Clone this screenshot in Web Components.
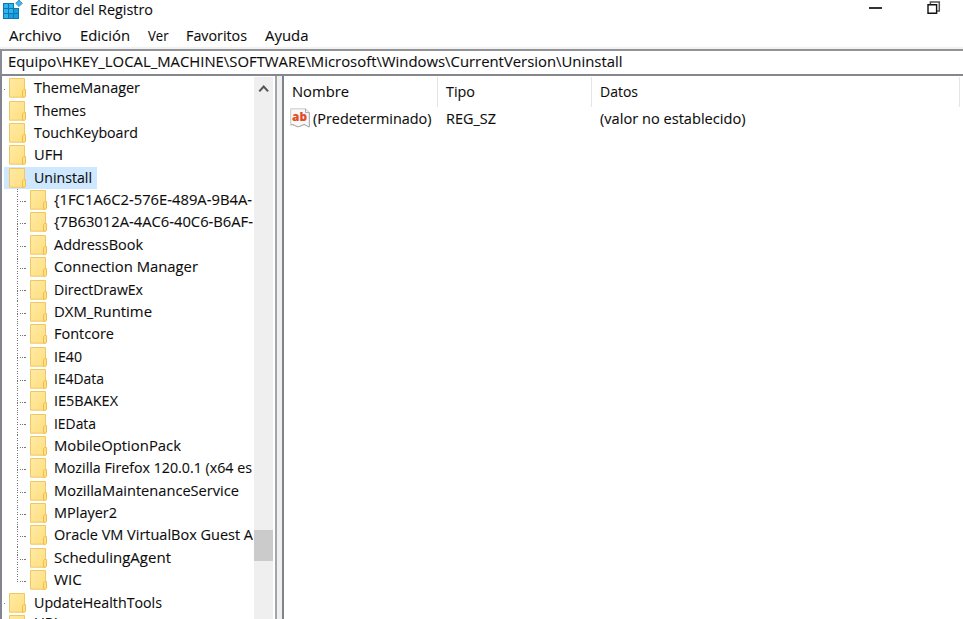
<!DOCTYPE html>
<html lang="es">
<head>
<meta charset="utf-8">
<title>Editor del Registro</title>
<style>
html,body{margin:0;height:100%;overflow:hidden;background:#fff}
</style>
</head>
<body>
<registry-editor></registry-editor>
<script>
const make = (name, html, setup) => customElements.define(name, class extends HTMLElement {
  connectedCallback() {
    if (this.shadowRoot) return;
    const root = this.attachShadow({mode: 'open'});
    const t = document.createElement('template');
    t.innerHTML = html;
    root.append(t.content.cloneNode(true));
    if (setup) setup(this, root);
  }
});

/* One line of text, condensed horizontally to the width in its "w" attribute. */
make('ui-text', `<style>
:host{display:block;white-space:nowrap;height:20px;line-height:18px;flex:none}
span{display:inline-block;transform-origin:0 50%;white-space:pre;-webkit-text-stroke:.1px currentColor}
</style><span></span>`, (el, root) => {
  const s = root.querySelector('span');
  s.textContent = el.getAttribute('t');
  const w = +el.getAttribute('w');
  el.style.width = w + 'px';
  s.style.transform = `scaleX(${w / s.getBoundingClientRect().width})`;
});

make('folder-icon', `<style>:host{display:block;width:18px;height:20px;flex:none}svg{display:block}</style>
<svg width="18" height="20" viewBox="0 0 18 20">
<defs><linearGradient id="g" x1="0" y1="0" x2="1" y2="1"><stop offset="0" stop-color="#ffeaa4"/><stop offset="1" stop-color="#ffde7f"/></linearGradient></defs>
<path d="M.5.5H15.5V19.2H.5Z" fill="url(#g)" stroke="#efc863"/>
<path d="M13.5 19.2V12.6L14.6 11.6H16.5V18.4L15.6 19.2Z" fill="#ffdf86" stroke="#ecc04d"/>
</svg>`);

make('regedit-icon', `<style>:host{display:block;width:20px;height:20px;flex:none}svg{display:block;overflow:visible}</style>
<svg width="20" height="20" viewBox="0 0 20 20">
<path d="M0 3H11V8H16V19H0Z" fill="#0b78b4"/>
<path d="M1 4H5V8H1ZM6 4H10V8H6ZM1 9H5V13H1ZM6 9H10V13H6ZM1 14H5V18H1Z" fill="#2fb5ee"/>
<path d="M11 9H15V13H11ZM6 14H10V18H6ZM11 14H15V18H11Z" fill="#169ddc"/>
<path d="M16 0L19.3 3.3L16 6.6L12.7 3.3Z" fill="#45b5e6" stroke="#2489bd" stroke-width=".8"/>
</svg>`);

make('string-icon', `<style>:host{display:block;width:21px;height:21px;flex:none}svg{display:block}</style>
<svg width="21" height="21" viewBox="0 0 21 21">
<path d="M.7.8H15.5L19.4 4.6V18.8C17.6 19.4 16.5 16.5 14 16.6C11.6 17 10 19.2 7.2 18.6C5 18 3.4 16 .7 16.8Z" fill="#f8f8f8" stroke="#c9c9c9"/>
<path d="M15.5.8V4.6H19.4M19.4 4.8V18.8C17.6 19.4 16.5 16.5 14 16.6C11.6 17 10 19.2 7.2 18.6C5 18 3.4 16 .7 16.8" fill="none" stroke="#a9a9a9"/>
<text x="2" y="13" textLength="15" lengthAdjust="spacingAndGlyphs" font-family="Open Sans,sans-serif" font-weight="800" font-size="13" fill="#df4e28">ab</text>
</svg>`);

make('title-bar', `<style>
:host{display:flex;height:24px;padding-left:3px;flex:none;align-items:flex-start}
ui-text{margin-left:7px}
.min{margin-left:auto;margin-top:7px;width:13px;height:1.5px;background:#333}
.max{margin:1px 22px 0 45px;width:14px;height:14px;display:block}
</style><regedit-icon></regedit-icon><ui-text t="Editor del Registro" w="123"></ui-text>
<div class="min"></div>
<svg class="max" viewBox="0 0 14 14" fill="none"><path d="M3.4 3.2V.9H12.3V9.9H10" stroke="#555" stroke-width="1.5"/><path d="M1 3.7H9.6V12.3H1Z" stroke="#111" stroke-width="1.4"/></svg>`);

make('menu-bar', `<style>
:host{display:flex;height:22px;padding:2px 0 0 9px;gap:18.1px;flex:none}
</style><ui-text t="Archivo" w="52.5"></ui-text><ui-text t="Edición" w="50"></ui-text><ui-text t="Ver" w="20.5"></ui-text><ui-text t="Favoritos" w="61"></ui-text><ui-text t="Ayuda" w="43.5"></ui-text>`);

make('address-bar', `<style>
:host{display:block;height:27px;box-sizing:border-box;flex:none;background:#fff;border-top:2px solid #929396;border-left:2px solid #8a8b8e;border-bottom:2px solid #85878c;padding:1px 0 0 6px;box-shadow:0 -2px #f1f1f1}
</style><ui-text t="Equipo\\HKEY_LOCAL_MACHINE\\SOFTWARE\\Microsoft\\Windows\\CurrentVersion\\Uninstall" w="614.5"></ui-text>`);

/* A key of the tree; "child" draws the dotted connector of a nested key. */
make('tree-row', `<style>
:host{display:flex;height:22.36px;align-items:center;flex:none;position:relative;padding-left:7px}
:host([child]){padding-left:28px}
folder-icon{margin-right:7px}
:host([child]) folder-icon{margin-right:6px}
:host([raised]) ui-text{margin-top:-4px}
.line{display:none}
:host([child]) .line{display:block;position:absolute;left:15px;top:0;width:10px;height:100%;
background:repeating-linear-gradient(90deg,#777 0 1px,transparent 1px 2.5px) 0 12px/10px 1px no-repeat,
repeating-linear-gradient(180deg,#777 0 1px,transparent 1px 2.5px) 0 0/1px 100% no-repeat}
:host([last]) .line{background-size:10px 1px,1px 12px}
:host([dot])::before{content:"";position:absolute;left:2px;top:12px;width:1px;height:1px;background:#888}
:host([selected])::before{content:"";position:absolute;left:2px;top:0;width:93px;height:100%;background:#cde8ff}
folder-icon,ui-text{position:relative}
</style><div class="line"></div><folder-icon></folder-icon><ui-text></ui-text>`, (el, root) => {
  const x = root.querySelector('ui-text'), n = document.createElement('ui-text');
  n.setAttribute('t', el.getAttribute('t'));
  n.setAttribute('w', el.getAttribute('w'));
  x.replaceWith(n);
});

make('scroll-bar', `<style>
:host{display:flex;flex-direction:column;width:19.5px;background:#efefef;flex:none;margin:1px 0 0 .6px}
svg{display:block;margin:6.5px 0 0 4px}
.thumb{margin-top:437.5px;height:31px;width:19px;background:#cbcbcb}
</style><svg width="12" height="9" viewBox="0 0 12 9" fill="none"><path d="M1.3 7.4L5.7 2.5L10.1 7.4" stroke="#555" stroke-width="2"/></svg><div class="thumb"></div>`);

make('key-tree', `<style>
:host{display:flex;box-sizing:border-box;width:277px;flex:none;border-left:2px solid #82848e;border-right:2px solid #a2a5ab;overflow:hidden;background:#fff}
.rows{width:251px;overflow:hidden;padding-top:1.1px;display:flex;flex-direction:column}
</style><div class="rows"></div><scroll-bar></scroll-bar>`, (el, root) => {
  const rows = root.querySelector('.rows');
  const add = (t, w, ...flags) => {
    const r = document.createElement('tree-row');
    r.setAttribute('t', t); r.setAttribute('w', w);
    flags.forEach(f => r.setAttribute(f, ''));
    rows.append(r);
  };
  add('ThemeManager', 106, 'dot'); add('Themes', 52); add('TouchKeyboard', 104); add('UFH', 29);
  add('Uninstall', 58, 'selected');
  [['{1FC1A6C2-576E-489A-9B4A-', 198], ['{7B63012A-4AC6-40C6-B6AF-', 199], ['AddressBook', 89],
   ['Connection Manager', 144], ['DirectDrawEx', 89], ['DXM_Runtime', 98], ['Fontcore', 60],
   ['IE40', 28], ['IE4Data', 50], ['IE5BAKEX', 64], ['IEData', 42], ['MobileOptionPack', 127],
   ['Mozilla Firefox 120.0.1 (x64 es', 198], ['MozillaMaintenanceService', 185], ['MPlayer2', 63],
   ['Oracle VM VirtualBox Guest A', 199], ['SchedulingAgent', 117]].forEach(([t, w]) => add(t, w, 'child'));
  add('WIC', 28, 'child', 'last');
  add('UpdateHealthTools', 128, 'dot');
  add('UPI', 24, 'raised');
});

make('value-list', `<style>
:host{display:block;flex:1;border-left:2px solid #7f8390;margin-left:5px;background:#fff;overflow:hidden}
.row{display:grid;grid-template-columns:154px 154px 368px 1fr;box-sizing:border-box}
.head{height:32px;padding-top:1px}
.head div{border-right:1px solid #e4e4e4;padding:5px 0 0 8px;box-sizing:border-box;height:30px}
.head div:last-child{border:0}
.data{height:24px;padding-top:1px}
.data div{padding-left:8px;display:flex}
.data .name{padding-left:6px}
.name string-icon{margin:-1px 2px 0 0}
</style><div class="row head"><div><ui-text t="Nombre" w="57"></ui-text></div><div><ui-text t="Tipo" w="29"></ui-text></div><div><ui-text t="Datos" w="38"></ui-text></div><div></div></div>
<div class="row data"><div class="name"><string-icon></string-icon><ui-text t="(Predeterminado)" w="118.5"></ui-text></div><div><ui-text t="REG_SZ" w="50"></ui-text></div><div><ui-text t="(valor no establecido)" w="145.5"></ui-text></div></div>`);

make('registry-editor', `<style>
:host{display:flex;flex-direction:column;width:963px;height:619px;overflow:hidden;background:#fff;color:#0c0c0c;font:14.6px "Open Sans","Noto Sans",sans-serif}
title-bar,menu-bar{position:relative}
address-bar{margin-top:1px}
main{display:flex;flex:1;min-height:0;background:#f0f0f0}
</style><title-bar></title-bar><menu-bar></menu-bar><address-bar></address-bar><main><key-tree></key-tree><value-list></value-list></main>`);
</script>
</body>
</html>
